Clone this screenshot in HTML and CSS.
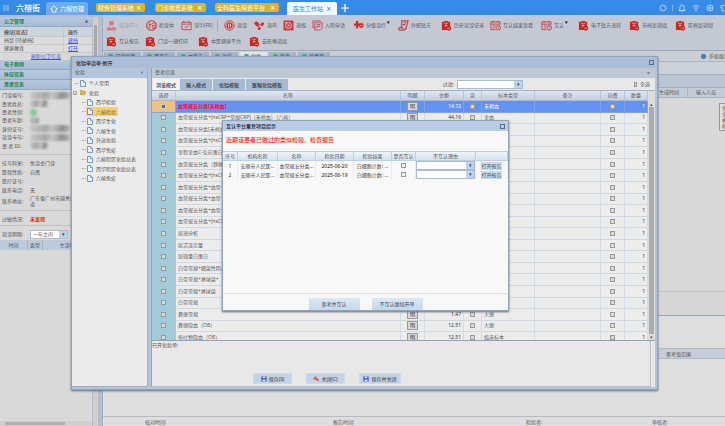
FILE: index.html
```html
<!DOCTYPE html>
<html lang="zh-CN">
<head>
<meta charset="utf-8">
<title>六榕街</title>
<link rel="stylesheet" href="styles.css">
</head>
<body>
<svg class="defs" aria-hidden="true">
  <symbol id="i-clip" viewBox="0 0 12 12"><path d="M1 2h2.500V1h4v1H10v5H7v4H1z" fill="#c8281e"/><circle cx="8.500" cy="9" r="2.600" fill="#c8281e"/><path d="M3 3.500h5M5.500 4.500v3M4 6h3M7 9h3" stroke="#dcc5c8" stroke-width=".8"/></symbol>
  <symbol id="i-user" viewBox="0 0 12 12"><circle cx="6" cy="3.500" r="2.700" fill="#cf7f84"/><path d="M1 11.500V9l3-2 2 2 2-2 3 2v2.500z" fill="#cf7f84"/></symbol>
  <symbol id="i-check" viewBox="0 0 12 12"><circle cx="6" cy="6" r="5.200" fill="none" stroke="#cf333a" stroke-width="1.200"/><path d="M3 5h2.500M4.200 3v6M6 5l2-2 2 2M6.500 6h3M6.500 8.800h3.200M7 7l.5 1M9.200 7l-.6 1" fill="none" stroke="#cf333a" stroke-width=".9"/></symbol>
  <symbol id="i-card" viewBox="0 0 12 12"><path d="M1 2.500h10v8H1zM1 4.500h10M4 7l1.500 1.500L8.500 6M3 1v2M9 1v2" fill="none" stroke="#c94950"/></symbol>
  <symbol id="i-stop" viewBox="0 0 12 12"><circle cx="6" cy="6" r="5.200" fill="none" stroke="#cf333a"/><circle cx="6" cy="6" r="3.500" fill="#cf333a"/><path d="M5 4v4M7 4v4" stroke="#e4ced2"/></symbol>
  <symbol id="i-pill" viewBox="0 0 12 12"><path d="M2.500 3.500 5 6" stroke="#cf333a" stroke-width="4" stroke-linecap="round"/><path d="M5.500 9.500 9.500 4" stroke="#c5cad4" stroke-width="4.500" stroke-linecap="round"/><path d="M5.500 9.500 9.500 4" stroke="#cf333a" stroke-width="3" stroke-linecap="round"/><path d="m7 8 1-1.500" stroke="#e5d5d9" stroke-width="2.500"/></symbol>
  <symbol id="i-coin" viewBox="0 0 12 12"><rect x=".5" y=".5" width="11" height="11" rx="1" fill="#c93c42"/><circle cx="6" cy="6" r="3.300" fill="none" stroke="#e0cbd0"/><circle cx="6" cy="6" r="1.200" fill="#e0cbd0"/><path d="M2 3h3" stroke="#e0cbd0"/></symbol>
  <symbol id="i-docs" viewBox="0 0 12 12"><path d="M3 8H1V1h8v1M3 3h8v6L9 11H3zM5 5h4M5 7h4M4 9l4-3" fill="none" stroke="#c94950"/></symbol>
  <symbol id="i-cross" viewBox="0 0 12 12"><path d="M4.500 1v8M1 5h7" stroke="#cf2d2d" stroke-width="2.600"/><circle cx="9" cy="6" r="2.600" fill="#cf2d2d"/><path d="M8 6h2" stroke="#fff" stroke-width=".8"/></symbol>
  <symbol id="i-rx" viewBox="0 0 12 12"><path d="M4 1h7L9 8c0 2-1 3-3 3H2C0 11 1 8 2 8h2zM6 3h3M5 5h3M3 9h4" fill="none" stroke="#c94047" stroke-width="1.200"/></symbol>
  <symbol id="i-cal" viewBox="0 0 12 12"><path d="M6 10.500H1V2h10v3M1 4.500h10M3.500 1v2M8.500 1v2M3 6.500h3M3 8.500h2" fill="none" stroke="#c94047"/><circle cx="9" cy="8.500" r="2.500" fill="none" stroke="#c94047"/><path d="M9 7v2h1" fill="none" stroke="#c94047" stroke-width=".7"/></symbol>
  <symbol id="i-file" viewBox="0 0 6 7"><path d="M.5.5h3l2 2v4h-5z" fill="#eef5fc" stroke="#5285c0" stroke-width=".8"/><path d="M3.500.5v2h2" fill="#b7d0ec" stroke="#5285c0" stroke-width=".6"/></symbol>
  <symbol id="i-folder" viewBox="0 0 7 6"><path d="M.5 5.500v-5h2l.7.800h2.500v1" fill="#eccb74" stroke="#b58a33" stroke-width=".6"/><path d="m.5 5.500 1.300-3.200h5L5.500 5.500z" fill="#f0bd4c" stroke="#a77d28" stroke-width=".5"/></symbol>
  <symbol id="i-save" viewBox="0 0 7 7"><path d="M.5.5h6v6h-6z" fill="#3c4fae"/><path d="M2 .5h3v2H2zM1.800 4h3.500v2.500H1.800z" fill="#dce5f5"/></symbol>
  <symbol id="i-close" viewBox="0 0 7 7"><path d="m.5 3 2.500-2.500 1 1.500L6 3.500 6.500 6 5 5 3 4 1.500 4.500z" fill="#e06a6a" stroke="#b93c42" stroke-width=".5"/></symbol>
</svg>

<header class="topbar">
  <button class="menu" aria-label="菜单"><svg viewBox="0 0 6 6"><path d="M0 1h6M0 3h6M0 5h6" stroke="#b7d3f3" stroke-width=".8"/></svg></button>
  <b class="brand">六榕街</b>
  <nav class="apps">
    <a class="home" href="#"><svg viewBox="0 0 8 8"><path d="M4 .7.7 4H2v3h4V4h1.300z" fill="none" stroke="#fff" stroke-width=".8"/></svg>六榕管理</a>
    <a class="app a1" href="#">财务管理系统<i>×</i></a>
    <a class="app a2" href="#">门诊收费系统<i>×</i></a>
    <a class="app a3" href="#">全科医生综合平台<i>×</i></a>
    <a class="app current" href="#">医生工作站<i>×</i></a>
  </nav>
  <button class="plus" aria-label="新建"><svg viewBox="0 0 8 8"><path d="M4 0v8M0 4h8" stroke="#fff" stroke-width="1.200"/></svg></button>
  <div class="tools">
    <svg viewBox="0 0 8 8"><path d="M1 4a3 3 0 0 1 5.500-1.500M7 4a3 3 0 0 1-5.500 1.500M5.500 3h2M.5 5h2"/></svg>
    <span class="bar"></span>
    <svg viewBox="0 0 8 8"><path d="M1 6.500h6L6 5V3a2 2 0 0 0-4 0v2zM3.500 7.500h1"/></svg>
    <svg viewBox="0 0 8 8"><path d="M.5 3a5 5 0 0 1 7 0M2 4.500a3 3 0 0 1 4 0M3.500 6h1L4 7z"/></svg>
    <svg viewBox="0 0 8 8"><circle cx="4" cy="4" r="3"/><circle cx="4" cy="4" r="1.200"/></svg>
    <svg viewBox="0 0 8 8"><path d="M3 1 .5 2.500 1.500 4 2 3.500V7h4V3.500l.5.500 1-1.500L5 1 4 2z"/></svg>
  </div>
</header>

<div class="page">
  <aside class="side">
    <div class="side-main">
      <h2>公卫管理<span>«</span></h2>
      <table class="mods">
        <thead><tr><th>模块[状态]</th><th>操作</th></tr></thead>
        <tbody>
          <tr><td>档案 [待建档]</td><td><a href="#">建档</a></td></tr>
          <tr><td>健康教育</td><td><a href="#">打开</a></td></tr>
        </tbody>
      </table>
      <a class="refresh" href="#">刷新公卫信息</a>
      <h2>电子病例</h2>
      <h2>体征信息</h2>
      <h2>患者信息</h2>
      <dl class="info">
        <dt>门诊编号:</dt><dd><i class="veil w40"></i></dd>
        <dt>患者姓名:</dt><dd><i class="veil w20"></i></dd>
        <dt>患者性别:</dt><dd><i class="veil dot"></i></dd>
        <dt>患者年龄:</dt><dd><i class="veil w10"></i></dd>
        <dt>身份证号:</dt><dd><i class="veil w40"></i></dd>
        <dt>就诊卡号:</dt><dd><i class="veil w40"></i></dd>
        <dt>患 者 ID:</dt><dd><i class="veil w20"></i></dd>
      </dl>
      <dl class="info lined">
        <dt>挂号科室:</dt><dd>免诊金门诊</dd>
        <dt>医保性质:</dt><dd>自费</dd>
        <dt>医疗证号:</dt><dd></dd>
        <dt>联系电话:</dt><dd>无</dd>
        <dt>联系地址:</dt><dd class="addr">广东省广州市越秀区<br>道</dd>
      </dl>
      <dl class="info lined allergy"><dt>过敏情况:</dt><dd class="red">未发现</dd></dl>
      <div class="period lined"><label for="period">就诊期限:</label><span class="drop"><select id="period"><option>一年之内</option></select></span></div>
      <table class="visits"><thead><tr><th>时间</th><th>类型</th><th>主诊断</th></tr></thead></table>
      <div class="hbar"></div>
    </div>
    <div class="side-scroll"></div>
  </aside>

  <main class="main">
    <div class="toolbar">
      <div class="trow r1">
        <button disabled><svg><use href="#i-user"/></svg>接诊(F1)</button>
        <button><svg><use href="#i-check"/></svg>检查中</button>
        <button class="sep"><svg><use href="#i-card"/></svg>诊毕(F8)</button>
        <button><svg><use href="#i-stop"/></svg>退诊</button>
        <button><svg><use href="#i-pill"/></svg>退药</button>
        <button><svg><use href="#i-coin"/></svg>退瓶</button>
        <button><svg><use href="#i-docs"/></svg>入院申请</button>
        <button class="more"><svg><use href="#i-cross"/></svg>分级诊疗</button>
        <button><svg><use href="#i-rx"/></svg>外配处方</button>
        <button><svg><use href="#i-clip"/></svg>历史就诊记录</button>
        <button><svg><use href="#i-cal"/></svg>互认结果查看</button>
        <button class="more"><svg><use href="#i-cal"/></svg>互认</button>
        <button><svg><use href="#i-clip"/></svg>电子处方流转</button>
        <button><svg><use href="#i-clip"/></svg>市档案调阅</button>
        <button><svg><use href="#i-clip"/></svg>区档案调阅</button>
      </div>
      <div class="trow r2">
        <button><svg><use href="#i-clip"/></svg>互认报告</button>
        <button><svg><use href="#i-clip"/></svg>门诊一键打印</button>
        <button><svg><use href="#i-clip"/></svg>中医健康平台</button>
        <button><svg><use href="#i-clip"/></svg>云影像调阅</button>
      </div>
    </div>
    <nav class="subtabs">
      <a href="#"><i></i>门诊处理</a><a href="#"><i></i>西药方</a><a href="#"><i></i>中药方</a><a href="#"><i></i>治疗</a><a href="#" class="on"><i></i>化验</a><a href="#"><i></i>检查</a><a href="#"><i></i>处置单</a>
      <span class="version"><i></i>系统版本</span>
    </nav>
    <div class="band light"></div>
    <div class="band"></div>
    <div class="lab-head"><span>生成时间</span><span>输入人员</span></div>
    <div class="lab-body"></div>
    <div class="strip"></div>
    <div class="gap"></div>
    <div class="range-head"><span>参考值范围</span></div>
    <div class="results"></div>
    <footer class="foot"><span>核对时间:</span><span>报告时间:</span><span>检验者:</span><span>审核者:</span></footer>
  </main>
</div>

<ul class="hint"><li>保存</li><li>全选</li><li>模板</li><li>检验</li></ul>

<section class="dialog order" role="dialog" aria-label="化验申请单-新开">
  <div class="title">化验申请单-新开<button class="x" aria-label="关闭窗口"></button></div>
  <div class="order-body">
    <div class="tree">
      <h3>化验<span>«</span></h3>
      <ul>
        <li class="top"><svg><use href="#i-file"/></svg><span>个人常用</span></li>
        <li class="top folder"><i>−</i><svg><use href="#i-folder"/></svg><span>化验</span></li>
        <li><svg><use href="#i-file"/></svg><span>西华检验</span></li>
        <li class="picked"><svg><use href="#i-file"/></svg><span>六榕检验</span></li>
        <li><svg><use href="#i-file"/></svg><span>西华生化</span></li>
        <li><svg><use href="#i-file"/></svg><span>六榕生化</span></li>
        <li><svg><use href="#i-file"/></svg><span>外送化验</span></li>
        <li><svg><use href="#i-file"/></svg><span>西华免疫</span></li>
        <li><svg><use href="#i-file"/></svg><span>六榕院区化验总表</span></li>
        <li><svg><use href="#i-file"/></svg><span>西华院区化验总表</span></li>
        <li><svg><use href="#i-file"/></svg><span>六榕免疫</span></li>
      </ul>
    </div>
    <div class="work">
      <h3>患者信息<span class="down">«</span></h3>
      <div class="modes">
        <button class="on">浏览模式</button><button>输入模式</button><button>化验模板</button><button>医嘱化验模板</button>
        <label class="filter" for="filter">过滤:</label>
        <span class="drop wide"><select id="filter"><option></option></select></span>
        <label class="all"><input type="checkbox">全选</label>
      </div>
      <div class="grid-wrap">
        <table class="items">
          <colgroup><col class="c1"><col><col class="c3"><col class="c4"><col class="c5"><col class="c6"><col class="c7"><col class="c8"><col class="c9"></colgroup>
          <thead><tr><th>选择</th><th>名称</th><th>明细</th><th>金额</th><th>急</th><th>标本类型</th><th>备注</th><th>自费</th><th>数量</th></tr></thead>
          <tbody id="items"></tbody>
        </table>
        <div class="vbar"><i>▴</i><b></b><i>▾</i></div>
      </div>
      <div class="opened">
        <p>已开化验单:</p>
        <div class="actions">
          <button><svg><use href="#i-save"/></svg>保存(S)</button>
          <button><svg><use href="#i-close"/></svg>关闭(C)</button>
          <button><svg><use href="#i-save"/></svg>保存并关闭</button>
        </div>
      </div>
    </div>
  </div>
</section>

<section class="dialog notice" role="dialog" aria-label="互认平台重复项目提示">
  <div class="title">互认平台重复项目提示<button class="x" aria-label="关闭提示"></button></div>
  <p class="warn">近期该患者已做过的类似检验、检查报告</p>
  <table class="dups">
    <colgroup><col class="d1"><col class="d2"><col class="d3"><col class="d4"><col class="d4"><col class="d6"><col class="d7"><col></colgroup>
    <thead><tr><th>序号</th><th>机构名称</th><th>名称</th><th>检验日期</th><th>检验结果</th><th>是否互认</th><th>不互认理由</th><th></th></tr></thead>
    <tbody>
      <tr><td>1</td><td>安顺市人民医...</td><td>血常规五分类...</td><td>2025-06-20</td><td>白细胞计数: ...</td><td><input type="checkbox" aria-label="是否互认 1"></td><td class="pick"><span class="drop"><select aria-label="不互认理由 1"><option></option></select></span></td><td><button>打开报告</button></td></tr>
      <tr><td>2</td><td>安顺市人民医...</td><td>血常规五分类...</td><td>2025-06-19</td><td>白细胞计数: ...</td><td><input type="checkbox" aria-label="是否互认 2"></td><td class="pick"><span class="drop"><select aria-label="不互认理由 2"><option></option></select></span></td><td><button>打开报告</button></td></tr>
    </tbody>
  </table>
  <div class="choices"><button>参考并互认</button><button>不互认继续开单</button></div>
</section>
<script src="script.js"></script>
</body>
</html>
```
FILE: styles.css
```css
* { box-sizing: border-box; }
html, body { height: 100%; }
body {
  margin: 0;
  overflow: hidden;
  display: flex;
  flex-direction: column;
  font: 5px/8px "Noto Sans", "Noto Sans CJK SC", sans-serif;
  color: #555;
  background: #dedede;
}
h2, h3, p, ul, dl, dd { margin: 0; padding: 0; font-size: inherit; }
ul { list-style: none; }
i { font-style: normal; }
button, select { font: inherit; color: inherit; border: 0; padding: 0; margin: 0; background: none; }
table { border-collapse: separate; border-spacing: 0; table-layout: fixed; width: 100%; }
td, th { padding: 0; font-weight: normal; white-space: nowrap; overflow: hidden; }
a { color: inherit; text-decoration: none; }
.defs { position: absolute; width: 0; height: 0; }
.red { color: #f01818; font-weight: bold; }

input[type="checkbox"] {
  appearance: none;
  width: 5px;
  height: 5px;
  margin: 0;
  border: 1px solid #9a9a9a;
  background: #d9d9d9;
  vertical-align: middle;
}
input[type="checkbox"]:checked { background: #50709c; border-color: #c9cdd5; }

.drop {
  display: flex;
  position: relative;
  height: 9px;
  border: 1px solid #a9bad2;
  background: #fff;
}
.drop select { appearance: none; flex: 1; width: 100%; height: 7px; padding-left: 2px; line-height: 7px; }
.drop::after {
  content: "▾";
  position: absolute;
  right: 0;
  top: 0;
  bottom: 0;
  width: 8px;
  line-height: 7px;
  text-align: center;
  color: #244;
  background: #bfd2ea;
  pointer-events: none;
}

/* Top bar */
.topbar {
  flex: none;
  display: flex;
  align-items: center;
  height: 15px;
  padding: 0 0 0 3px;
  background: #368ae8;
  color: #fff;
  font-size: 6px;
}
.topbar svg { display: block; width: 8px; height: 8px; }
.topbar .menu svg { width: 6px; height: 6px; }
.brand { width: 38px; padding-left: 7px; font-size: 8px; font-weight: 500; white-space: nowrap; }
.apps { display: flex; align-items: center; }
.home, .app { display: flex; align-items: center; white-space: nowrap; }
.home { width: 42px; height: 13px; margin: 2px 8px 0 -1px; gap: 2px; padding-left: 4px; border-radius: 3px 3px 0 0; background: #6eabf0; }
.app { justify-content: space-between; height: 9px; padding: 0 4px 0 2px; border-radius: 2px; background: #e4b02a; }
.app i { font-size: 8px; line-height: 8px; }
.a1 { width: 49px; margin-right: 10px; }
.a2 { width: 51px; margin-right: 9px; }
.a3 { width: 64px; margin-right: 8px; }
.app.current { width: 50px; height: 13px; margin-top: 2px; padding: 0 6px; border-radius: 2px 2px 0 0; background: #f5f8fb; color: #3785da; }
.plus { margin-left: 4px; }
.tools { display: flex; align-items: center; gap: 6px; margin-left: auto; margin-right: -3px; }
.tools svg { fill: none; stroke: #d4e5fa; stroke-width: .8; }
.tools .bar { width: 1px; height: 6px; margin: 0 -1px; background: #7eb2ee; }

.page { flex: 1; display: flex; min-height: 0; background: #b9bfca; }

/* Patient side bar */
.side { flex: none; width: 98px; display: flex; padding-top: 2px; }
.side-main { flex: 1; display: flex; flex-direction: column; background: #d9d9d9; border-right: 1px solid #b5bcc8; min-width: 0; overflow: hidden; }
.side-main > * { flex: none; }
.side-scroll { width: 5px; background: linear-gradient(#a9a9a9, #a9a9a9) center 8px / 3px 220px no-repeat, #cfcfcf; }
.hbar { height: 5px; margin-top: auto; background: linear-gradient(#b0b0b0, #b0b0b0) 5px center / 60px 3px no-repeat, #cfcfcf; }
.side h2 {
  display: flex;
  justify-content: space-between;
  height: 10px;
  padding: 0 4px;
  line-height: 9px;
  color: #1f8a45;
  background: linear-gradient(#b6c8de, #a8bcd6);
  border-bottom: 1px solid #93a9c6;
}
.side h2 span { transform: rotate(90deg); color: #345; }
.mods { background: #dcdcdc; }
.mods th { height: 9px; text-align: left; color: #222; background: #cdd3da; }
.mods td { height: 8px; border-top: 1px solid #c4cad2; line-height: 7px; }
.mods th:first-child, .mods td:first-child { width: 63px; padding-left: 4px; }
.mods th + th, .mods td + td { padding-left: 4px; border-left: 1px solid #c4cad2; }
.mods a, .refresh { color: #4a50e0; text-decoration: underline; }
.refresh { display: block; height: 8px; text-align: center; line-height: 7px; border-top: 1px solid #c4cad2; }
.info { display: grid; grid-template-columns: 28px 1fr; grid-auto-rows: minmax(9px, auto); align-items: center; padding: 1px 0 4px 2px; white-space: nowrap; }
.info:first-of-type { height: 64px; grid-auto-rows: 1fr; }
.lined { border-top: 1px solid #c2c2c2; }
.info.lined { padding-top: 3px; padding-bottom: 2px; }
.addr { line-height: 6px; padding: 1px 0; }
.veil { display: block; height: 7px; border-radius: 3px; filter: blur(1px); background: linear-gradient(100deg, #c9c9c9, #a5a5a5 40%, #c6c6c6 55%, #8e8e8e 80%, #bbb); }
.w40 { width: 40px; }
.w20 { width: 18px; }
.w10 { width: 9px; }
.dot { width: 7px; background: #88c795; }
.period { display: flex; align-items: center; height: 15px; padding: 2px 0 0 2px; }
.period label { width: 28px; }
.period .drop { width: 38px; }
.visits th { height: 10px; border-right: 1px solid #a8b5c6; background: #bccadb; }
.visits th:nth-child(1) { width: 28px; }
.visits th:nth-child(2) { width: 15px; }

/* Work area behind the windows */
.main { flex: 1; display: flex; flex-direction: column; min-width: 0; margin-left: 4px; background: #dedede; border-left: 1px solid #9fb0c8; }
.toolbar { flex: none; height: 36px; padding: 2px 0 0 3px; background: #c3c8d2; border-bottom: 1px solid #9ca8ba; overflow: hidden; }
.trow { display: grid; height: 16px; align-items: center; }
.r1 { grid-template-columns: 40px 35px 43px 30px 29px 29px 41px 45px 43px 49px 51px 37px 51px 46px 44px; }
.r2 { grid-template-columns: 39px 53px 51px 50px; }
.trow button { display: flex; align-items: center; gap: 2px; white-space: nowrap; color: #555c68; }
.trow button:disabled { color: #9a9fa9; }
.trow svg { flex: none; width: 11px; height: 11px; }
.trow .sep { border-right: 1px solid #a5acb8; margin-right: 6px; }
.trow .more::after { content: "▾"; margin: -6px 0 0 -1px; color: #000; }
.subtabs { flex: none; display: flex; gap: 2px; height: 11px; padding: 1px 0 0 1px; background: #cbcfd5; border-bottom: 1px solid #a9b6c8; }
.subtabs a { display: flex; gap: 2px; padding: 0 6px 0 4px; white-space: nowrap; background: #a4b6ca; color: #345; }
.subtabs a.on { background: #e2e5e8; }
.subtabs i { width: 5px; height: 5px; margin-top: 2px; border-radius: 2px; background: #4da477; }
.version { display: flex; gap: 3px; margin-left: auto; margin-right: -4px; white-space: nowrap; }
.subtabs .version i { background: #4d7fae; }
.band { flex: none; height: 13px; background: #bcc5d2; border-bottom: 1px solid #a4b1c4; }
.band.light { background: #ccd1d9; }
.lab-head { flex: none; display: flex; justify-content: flex-end; height: 10px; background: #c3cbd6; border-bottom: 1px solid #aab4c2; }
.lab-head span { width: 38px; padding-left: 8px; border-left: 1px solid #aab4c2; white-space: nowrap; }
.lab-head span:first-child { width: 33px; padding-left: 4px; }
.lab-body { flex: 194; background: #d8d8d8; }
.strip { flex: 23; background: #d6d6d6; border-top: 1px solid #c2c6cc; border-bottom: 1px solid #98a9be; }
.gap { flex: 33; }
.range-head { flex: none; height: 11px; display: flex; justify-content: flex-end; padding-right: 34px; line-height: 10px; background: #c5cdd9; border: 1px solid #aebccd; border-width: 1px 0; }
.results { flex: 57; }
.foot { flex: none; display: grid; grid-template-columns: 188px 193px 126px 1fr; height: 10px; padding-left: 42px; border-top: 1px solid #b5bcc6; line-height: 10px; }
.hint { position: absolute; top: 103px; right: -9px; width: 15px; padding: 1px 2px; border: 1px solid #999; background: #e0e0e0; line-height: 6px; white-space: nowrap; }

/* Windows */
.dialog { position: absolute; display: flex; flex-direction: column; border: 1px solid #8fa3bf; box-shadow: 0 1px 2px #5f6b7c; }
.title { flex: none; display: flex; justify-content: space-between; align-items: center; height: 10px; padding: 0 3px; color: #222; font-weight: 500; }
.x { width: 5px; height: 5px; border: 1px solid #5d6b80; }
.order { left: 71px; right: 67px; top: 56px; height: 334px; background: #b4c4da; }
.order .title { height: 11px; background: #abbed7; padding-left: 4px; }
.order-body { flex: 1; display: flex; gap: 3px; min-height: 0; padding: 0 2px 2px 0; }
.order h3 { display: flex; flex: none; justify-content: space-between; height: 10px; padding: 0 4px 0 3px; line-height: 9px; font-weight: normal; background: #b3c5dc; }
.order h3 span { color: #345; }
.order h3 .down { transform: rotate(-90deg); }
.tree { flex: none; width: 76px; background: #ebebeb; border: 1px solid #9eb0c8; border-width: 0 1px 1px 0; }
.tree li { display: grid; grid-template-columns: 9px 6px auto; justify-content: start; align-items: center; gap: 1px; height: 10px; margin: 0 0 0 5px; white-space: nowrap; }
.tree li:nth-child(even) { height: 9px; }
.tree li::before { content: ""; justify-self: end; width: 4px; border-top: 1px dotted #aaa; }
.tree li.top { margin-left: -2px; }
.tree li.folder::before { display: none; }
.tree li.folder i { width: 4px; height: 4px; margin-left: 3px; line-height: 3px; border: 1px solid #aaa; font-size: 4px; }
.tree svg { width: 6px; height: 7px; }
.tree li span { padding: 0 2px; }
.tree .picked { background: linear-gradient(#f6cf70, #f6cf70) 9px 0 / 32px 9px no-repeat; color: #664; }

.work { flex: 1; display: flex; flex-direction: column; min-width: 0; background: #e8e8e8; border-left: 1px solid #8fa5c2; }
.work h3 { background: #bdc8d3; }
.modes { flex: none; display: flex; align-items: center; height: 13px; gap: 1px; padding-left: 1px; border-bottom: 1px solid #a3b5cb; }
.modes button { align-self: flex-end; height: 11px; padding: 0 6px; background: #a6bad2; color: #334; font-weight: 500; }
.modes .on { padding: 0 3px; background: #f3f3f3; }
.filter { margin-left: auto; padding-right: 2px; }
.wide { width: 66px; margin-right: 110px; }
.all { display: flex; align-items: center; gap: 3px; width: 16px; margin-right: 5px; white-space: nowrap; }
.grid-wrap { flex: 1; min-height: 0; display: flex; overflow: hidden; border-bottom: 1px solid #91a3ba; }
.items { height: 253px; color: #5c5c5c; }
.c1 { width: 24px; } .c3 { width: 24px; } .c4 { width: 39px; } .c5 { width: 18px; }
.c6 { width: 53px; } .c7 { width: 66px; } .c8 { width: 24px; } .c9 { width: 23px; }
.items th { height: 10px; background: linear-gradient(#dfe6ee, #c6d1de); border-right: 1px solid #b7c6d8; border-bottom: 1px solid #a9bace; line-height: 9px; }
.items td { border-right: 1px solid #d3dbe6; border-bottom: 1px solid #d0d8e2; background: #ececec; line-height: 9px; text-align: center; }
.items td:nth-child(1) { background: #a2cad9; border-color: #a2cad9; }
.items td:nth-child(2), .items td:nth-child(6) { text-align: left; padding-left: 2px; }
.items td:nth-child(4), .items td:nth-child(9) { text-align: right; padding-right: 2px; color: #333; }
.items td button { display: block; width: 11px; height: 9px; margin: 0 auto; border: 1px solid #9b9b9b; background: #d8d8d8; color: #222; line-height: 7px; }
.items input { display: block; margin: 0 auto; }
.items .chosen td { background: #6492f0; border-color: #7da3ef; color: #fff; }
.items .chosen td:nth-child(1) { background: #eec27e; }
.items .chosen td:nth-child(2) { color: #f01028; font-weight: bold; }
.vbar { flex: none; width: 7px; display: flex; flex-direction: column; background: #dcdcdc; text-align: center; padding-top: 10px; line-height: 6px; }
.vbar b { flex: 1; margin: 0 1px; background: #ababab; }
.opened { flex: none; height: 46px; display: flex; flex-direction: column; justify-content: space-between; margin-right: 4px; padding-bottom: 2px; border: 1px solid #b9c0c9; border-width: 0 1px 1px 0; }
.actions { display: flex; gap: 14px; justify-content: center; padding-right: 148px; }
.actions button { display: flex; align-items: center; justify-content: center; gap: 2px; width: 39px; height: 11px; background: #c4d3e5; color: #334; border: 1px solid #cfdbe9; }
.actions button:last-child { width: 42px; }
.actions svg { width: 6px; height: 6px; }

.notice { left: 222px; top: 120px; width: 287px; height: 191px; background: #f8f8f8; }
.notice .title { background: #b9cce6; }
.warn { flex: none; height: 20px; padding-left: 3px; line-height: 19px; font-size: 6px; color: #f21818; font-weight: 500; }
.d1 { width: 15px; } .d2 { width: 40px; } .d3 { width: 38px; } .d4 { width: 38px; } .d6 { width: 24px; } .d7 { width: 60px; }
.dups th { height: 10px; background: linear-gradient(#eef4fa, #d5e1ef); border: 1px solid #bfcfe2; border-width: 1px 1px 1px 0; line-height: 8px; }
.dups td { height: 9px; line-height: 8px; text-align: center; border-right: 1px solid #e6ebf2; color: #444; }
.dups td:nth-child(4) { color: #111; }
.dups td button { background: #c9dceb; color: #456; }
.dups input { display: block; margin: 0 auto; background: #f2f2f2; }
.choices { display: flex; justify-content: center; gap: 12px; margin-top: auto; padding: 4px 0 0; border-top: 1px solid #dce2ea; }
.choices button { width: 51px; height: 12px; background: linear-gradient(#dce8f5, #c6d8ec); color: #445; }
```
FILE: script.js
```js
// name, price, specimen
const rows = [
  ["血常规五分类[末梢血]", "14.72", "末梢血"],
  ["血常规五分类+(hsCRP+常规CRP)（末梢血）（六榕）", "44.16", "全血"],
  ["血常规五分类[末梢血]", "", ""],
  ["血常规五分类+(hsCRP)", "", ""],
  ["全程全血C-反应蛋白", "", ""],
  ["血常规五分类（静脉血）", "", ""],
  ["血常规五分类+(hsCRP)", "", ""],
  ["血常规五分类+血型", "", ""],
  ["血常规五分类+血型", "", ""],
  ["血常规五分类+血型", "", ""],
  ["血常规五分类+(hsCRP)", "", ""],
  ["尿液分析", "", ""],
  ["尿沉渣定量", "", ""],
  ["尿微量白蛋白", "", ""],
  ["白带常规+细菌性阴道", "", ""],
  ["白带常规+淋球菌+", "", ""],
  ["白带常规+淋球菌", "", ""],
  ["白带常规", "", ""],
  ["粪便常规", "1.47", "大便"],
  ["粪便隐血（OB）", "12.51", "大便"],
  ["呕吐物隐血（OB）", "12.51", "临床标本"]
];

document.getElementById("items").innerHTML = rows.map(([name, price, specimen], i) => `
  <tr class="${i === 0 ? "chosen" : ""}">
    <td><input type="checkbox" aria-label="选择 ${name}" ${i === 0 ? "checked" : ""}></td>
    <td>${name}</td>
    <td><button>明</button></td>
    <td>${price}</td>
    <td><input type="checkbox" aria-label="急 ${name}"></td>
    <td>${specimen}</td>
    <td></td>
    <td><input type="checkbox" aria-label="自费 ${name}"></td>
    <td>1</td>
  </tr>`).join("");
```
